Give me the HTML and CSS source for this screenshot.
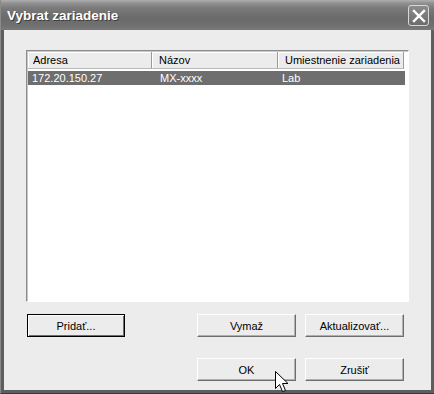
FILE: index.html
```html
<!DOCTYPE html>
<html>
<head>
<meta charset="utf-8">
<link rel="stylesheet" href="styles.css">
</head>
<body>
<div class="window">
  <div class="titlebar">
    <span class="title">Vybrat zariadenie</span>
    <span class="close"><svg width="14" height="14" viewBox="0 0 14 14"><path d="M2 2 L12 12 M12 2 L2 12" stroke="#fff" stroke-width="2.4" stroke-linecap="square"/></svg></span>
  </div>
  <div class="client">
    <div class="list">
      <div class="header">
        <div class="hcell c1">Adresa</div>
        <div class="hcell c2">Názov</div>
        <div class="hcell c3">Umiestnenie zariadenia</div>
      </div>
      <div class="row selected">
        <div class="cell c1">172.20.150.27</div>
        <div class="cell c2">MX-xxxx</div>
        <div class="cell c3">Lab</div>
      </div>
    </div>
    <div class="btnrow first">
      <button class="btn default">Pridať...</button>
      <div class="spacer"></div>
      <button class="btn">Vymaž</button>
      <button class="btn">Aktualizovať...</button>
    </div>
    <div class="btnrow second">
      <div class="spacer"></div>
      <button class="btn">OK</button>
      <button class="btn">Zrušiť</button>
    </div>
    <svg class="cursor" width="16" height="24" viewBox="0 0 16 24"><path d="M1.5 1.5 L1.5 18.5 L5.5 14.5 L8.5 21.5 L11.5 20.5 L8.5 13.5 L14 13.5 Z" fill="#fff" stroke="#000" stroke-width="1" stroke-linejoin="miter"/></svg>
  </div>
</div>
</body>
</html>
```
FILE: styles.css
```css
html, body { margin: 0; padding: 0; background: #5a5a5a; }
.window {
  width: 434px; height: 394px; box-sizing: border-box;
  background: #5e5e5e;
  display: flex; flex-direction: column;
  font-family: "Liberation Sans", Arial, sans-serif;
  font-size: 11px; color: #000;
  border-left: 1px solid #8a8a8a;
  border-bottom: 1px solid #3a3a3a;
  overflow: hidden;
}
.titlebar {
  height: 30px; flex: none;
  display: flex; align-items: center; justify-content: space-between;
  padding: 0 5px 0 6px;
  background: linear-gradient(to bottom, #b0b0b0 0, #929292 3px, #7a7a7a 8px, #6a6a6a 18px, #707070 26px, #7a7a7a 30px);
}
.title {
  color: #fff; font-weight: bold; font-size: 13.5px;
  text-shadow: 1px 1px 0 #3c3c3c;
  padding-top: 1px;
}
.close {
  width: 19px; height: 19px;
  border: 1px solid #d8d8d8; border-radius: 3px;
  background: linear-gradient(to bottom, #8c8c8c, #6c6c6c);
  display: flex; align-items: center; justify-content: center;
  margin-top: 1px;
}
.client {
  flex: 1; position: relative;
  margin: 0 3px 3px 3px;
  background: #ececec;
  padding: 20px 22px 0 22px;
  display: flex; flex-direction: column;
}
.list {
  height: 252px; box-sizing: border-box; flex: none;
  background: #fff;
  border-top: 1px solid #8c8c8c; border-left: 1px solid #8c8c8c;
  border-right: 1px solid #fff; border-bottom: 1px solid #fff;
  box-shadow: inset 1px 1px 0 #c8c8c8;
  padding: 1px 0 0 1px;
}
.header { display: flex; height: 17px; }
.hcell {
  box-sizing: border-box; height: 17px; line-height: 16px;
  padding-left: 5px;
  background: #ececec;
  border-right: 1px solid #9a9a9a;
  border-bottom: 1px solid #b8b8b8;
  box-shadow: inset 1px 1px 0 #fff;
  white-space: nowrap; overflow: hidden;
}
.hcell.c2, .hcell.c3 { padding-left: 7px; }
.c1 { width: 124px; }
.c2 { width: 126px; }
.c3 { width: 126px; }
.row { display: flex; height: 14px; line-height: 14px; margin-top: 2px; width: 377px; }
.cell { box-sizing: border-box; white-space: nowrap; }
.row .c1 { padding-left: 4px; }
.row .c2 { padding-left: 8px; }
.row .c3 { padding-left: 4px; }
.selected { background: #6e6e6e; color: #fff; }
.btnrow { display: flex; height: 23px; flex: none; padding-right: 5px; }
.btnrow.first { margin-top: 12px; padding-left: 1px; }
.btnrow.second { margin-top: 21px; }
.spacer { flex: 1; }
.btn {
  width: 99px; height: 23px; box-sizing: border-box;
  font-family: "Liberation Sans", Arial, sans-serif; font-size: 11px; color: #000;
  background: #ececec;
  border: 1px solid; border-color: #fff #6e6e6e #6e6e6e #fff;
  box-shadow: inset -1px -1px 0 #b0b0b0;
  padding: 0; margin-left: 9px;
}
.btnrow .btn:first-child { margin-left: 0; }
.btn.default {
  width: 98px;
  border: 1px solid #000;
  box-shadow: inset 1px 1px 0 #fff, inset -1px -1px 0 #6e6e6e;
}
.cursor { position: absolute; left: 270px; top: 340px; }
```
